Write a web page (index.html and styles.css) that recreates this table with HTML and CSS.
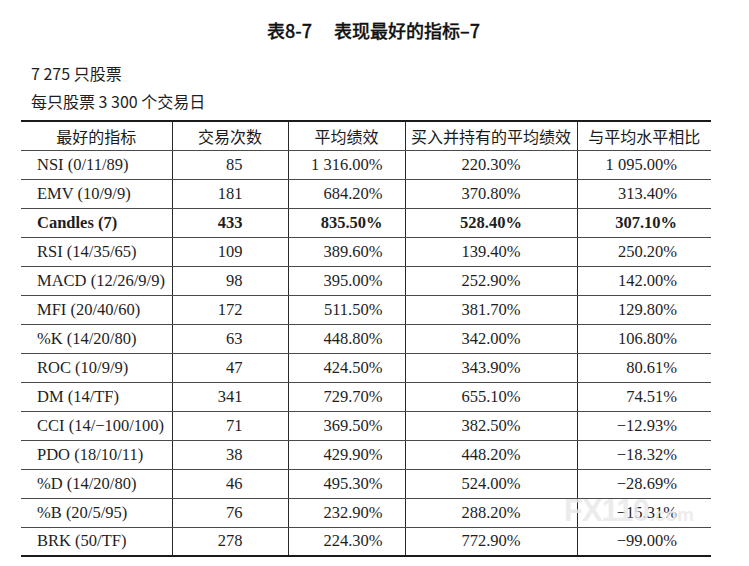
FILE: index.html
```html
<!DOCTYPE html>
<html lang="zh-CN">
<head>
<meta charset="utf-8">
<title>表8-7 表现最好的指标–7</title>
<link rel="stylesheet" href="styles.css">
</head>
<body>
<div class="page">
  <h1 class="title">表8-7<span class="gap"></span>表现最好的指标–7</h1>
  <p class="note note-first">7 275 只股票</p>
  <p class="note">每只股票 3 300 个交易日</p>
  <table class="data">
    <colgroup>
      <col class="c1"><col class="c2"><col class="c3"><col class="c4"><col class="c5">
    </colgroup>
    <thead>
      <tr><th>最好的指标</th><th>交易次数</th><th>平均绩效</th><th>买入并持有的平均绩效</th><th>与平均水平相比</th></tr>
    </thead>
    <tbody>
      <tr><td>NSI (0/11/89)</td><td>85</td><td>1 316.00%</td><td>220.30%</td><td>1 095.00%</td></tr>
      <tr><td>EMV (10/9/9)</td><td>181</td><td>684.20%</td><td>370.80%</td><td>313.40%</td></tr>
      <tr class="best"><td>Candles (7)</td><td>433</td><td>835.50%</td><td>528.40%</td><td>307.10%</td></tr>
      <tr><td>RSI (14/35/65)</td><td>109</td><td>389.60%</td><td>139.40%</td><td>250.20%</td></tr>
      <tr><td>MACD (12/26/9/9)</td><td>98</td><td>395.00%</td><td>252.90%</td><td>142.00%</td></tr>
      <tr><td>MFI (20/40/60)</td><td>172</td><td>511.50%</td><td>381.70%</td><td>129.80%</td></tr>
      <tr><td>%K (14/20/80)</td><td>63</td><td>448.80%</td><td>342.00%</td><td>106.80%</td></tr>
      <tr><td>ROC (10/9/9)</td><td>47</td><td>424.50%</td><td>343.90%</td><td>80.61%</td></tr>
      <tr><td>DM (14/TF)</td><td>341</td><td>729.70%</td><td>655.10%</td><td>74.51%</td></tr>
      <tr><td>CCI (14/−100/100)</td><td>71</td><td>369.50%</td><td>382.50%</td><td>−12.93%</td></tr>
      <tr><td>PDO (18/10/11)</td><td>38</td><td>429.90%</td><td>448.20%</td><td>−18.32%</td></tr>
      <tr><td>%D (14/20/80)</td><td>46</td><td>495.30%</td><td>524.00%</td><td>−28.69%</td></tr>
      <tr><td>%B (20/5/95)</td><td>76</td><td>232.90%</td><td>288.20%</td><td>−15.31%</td></tr>
      <tr><td>BRK (50/TF)</td><td>278</td><td>224.30%</td><td>772.90%</td><td>−99.00%</td></tr>
    </tbody>
  </table>
  <div class="watermark" aria-hidden="true"><span class="wm-big">FX110</span><span class="wm-small">.com</span></div>
</div>
</body>
</html>
```

FILE: styles.css
```css
* { box-sizing: border-box; }
html, body { margin: 0; padding: 0; background: #fff; }
body { width: 749px; height: 566px; overflow: hidden; }

.page {
  position: relative;
  width: 749px;
  height: 566px;
  padding-top: 18px;
  color: #1c1c1c;
  font-family: "Noto Sans CJK SC", "Noto Sans", sans-serif;
}

.title {
  margin: 0;
  text-align: center;
  font-size: 18px;
  line-height: 24px;
  font-weight: 500;
  color: #111;
  padding-right: 2px;
  -webkit-text-stroke: 0.3px #111;
}
.title .gap { display: inline-block; width: 22px; }

.note {
  margin: 0;
  padding-left: 31px;
  font-size: 16px;
  line-height: 28px;
  color: #1e1e1e;
}
.note-first { margin-top: 17px; }

.data {
  margin: 5px 0 0 21px;
  width: 690px;
  border-collapse: collapse;
  table-layout: fixed;
  border-top: 2px solid #1a1a1a;
  border-bottom: 2px solid #1a1a1a;
}
.data col.c1 { width: 151px; }
.data col.c2 { width: 116px; }
.data col.c3 { width: 117px; }
.data col.c4 { width: 172px; }
.data col.c5 { width: 134px; }

.data th, .data td {
  height: 29px;
  padding: 0;
  border-bottom: 1px solid #4a4a4a;
  border-left: 1px solid #2a2a2a;
  vertical-align: middle;
  white-space: nowrap;
}
.data th:first-child, .data td:first-child { border-left: none; }
.data tbody tr:last-child td { border-bottom: none; }

.data th {
  font-family: "Noto Sans CJK SC", sans-serif;
  font-weight: 400;
  font-size: 16px;
  text-align: center;
  color: #1a1a1a;
}

.data td {
  font-family: "Liberation Serif", "Times New Roman", serif;
  font-size: 16.5px;
  color: #1e1e1e;
}
.data td:nth-child(1) { text-align: left; padding-left: 16px; }
.data td:nth-child(2) { text-align: right; padding-right: 45px; }
.data td:nth-child(3) { text-align: right; padding-right: 22px; }
.data td:nth-child(4) { text-align: center; }
.data td:nth-child(5) { text-align: right; padding-right: 34px; }

.data tr.best td { font-weight: 700; }

.watermark {
  position: absolute;
  left: 564px;
  top: 494px;
  display: flex;
  align-items: baseline;
  font-family: "Liberation Sans", Arial, sans-serif;
  font-weight: 700;
  color: rgba(232, 232, 232, 0.82);
  pointer-events: none;
}
.wm-big { font-size: 31px; letter-spacing: -1px; line-height: 34px; }
.wm-small { font-size: 19px; line-height: 20px; margin-left: 1px; }
```
